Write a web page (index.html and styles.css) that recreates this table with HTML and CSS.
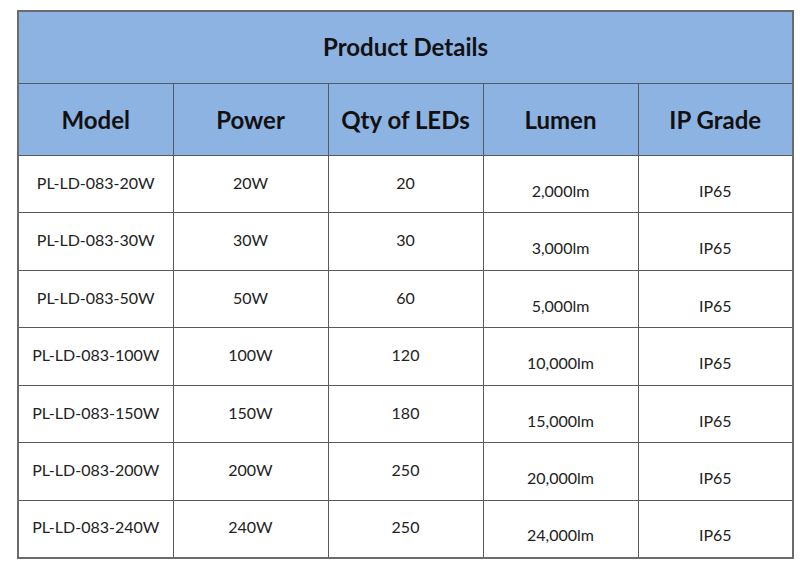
FILE: index.html
```html
<!DOCTYPE html>
<html>
<head>
<meta charset="utf-8">
<link rel="stylesheet" href="styles.css">
</head>
<body>
<table class="spec">
  <colgroup>
    <col class="c"><col class="c"><col class="c"><col class="c"><col class="c">
  </colgroup>
  <thead>
    <tr class="title-row"><th colspan="5">Product Details</th></tr>
    <tr class="head-row">
      <th>Model</th><th>Power</th><th>Qty of LEDs</th><th>Lumen</th><th>IP Grade</th>
    </tr>
  </thead>
  <tbody>
    <tr><td>PL-LD-083-20W</td><td>20W</td><td>20</td><td class="low">2,000lm</td><td class="low">IP65</td></tr>
    <tr><td>PL-LD-083-30W</td><td>30W</td><td>30</td><td class="low">3,000lm</td><td class="low">IP65</td></tr>
    <tr><td>PL-LD-083-50W</td><td>50W</td><td>60</td><td class="low">5,000lm</td><td class="low">IP65</td></tr>
    <tr><td>PL-LD-083-100W</td><td>100W</td><td>120</td><td class="low">10,000lm</td><td class="low">IP65</td></tr>
    <tr><td>PL-LD-083-150W</td><td>150W</td><td>180</td><td class="low">15,000lm</td><td class="low">IP65</td></tr>
    <tr><td>PL-LD-083-200W</td><td>200W</td><td>250</td><td class="low">20,000lm</td><td class="low">IP65</td></tr>
    <tr><td>PL-LD-083-240W</td><td>240W</td><td>250</td><td class="low">24,000lm</td><td class="low">IP65</td></tr>
  </tbody>
</table>
</body>
</html>
```
FILE: styles.css
```css
html, body {
  margin: 0;
  padding: 0;
  background: #ffffff;
}
body {
  padding: 10px 0 0 17px;
  font-family: Lato, "Open Sans", sans-serif;
}
.spec {
  border-collapse: collapse;
  width: 775px;
  table-layout: fixed;
  border: 2px solid #6b6b6b;
}
.spec col.c {
  width: 155px;
}
.spec th, .spec td {
  border: 1px solid #555a60;
  text-align: center;
  padding: 0;
  line-height: 1.2;
}
.title-row {
  height: 72px;
}
.head-row {
  height: 72px;
}
.spec tbody tr {
  height: 57.5px;
}
.title-row th {
  background: #8db3e2;
  font-size: 24px;
  font-weight: 700;
  color: #111;
}
.head-row th {
  background: #8db3e2;
  font-size: 24px;
  font-weight: 700;
  color: #111;
  padding-top: 2px;
}
.spec td {
  font-size: 16px;
  color: #222;
  vertical-align: middle;
  padding-bottom: 3px;
}
.spec td.low {
  padding-top: 13px;
  padding-bottom: 0;
}
```
